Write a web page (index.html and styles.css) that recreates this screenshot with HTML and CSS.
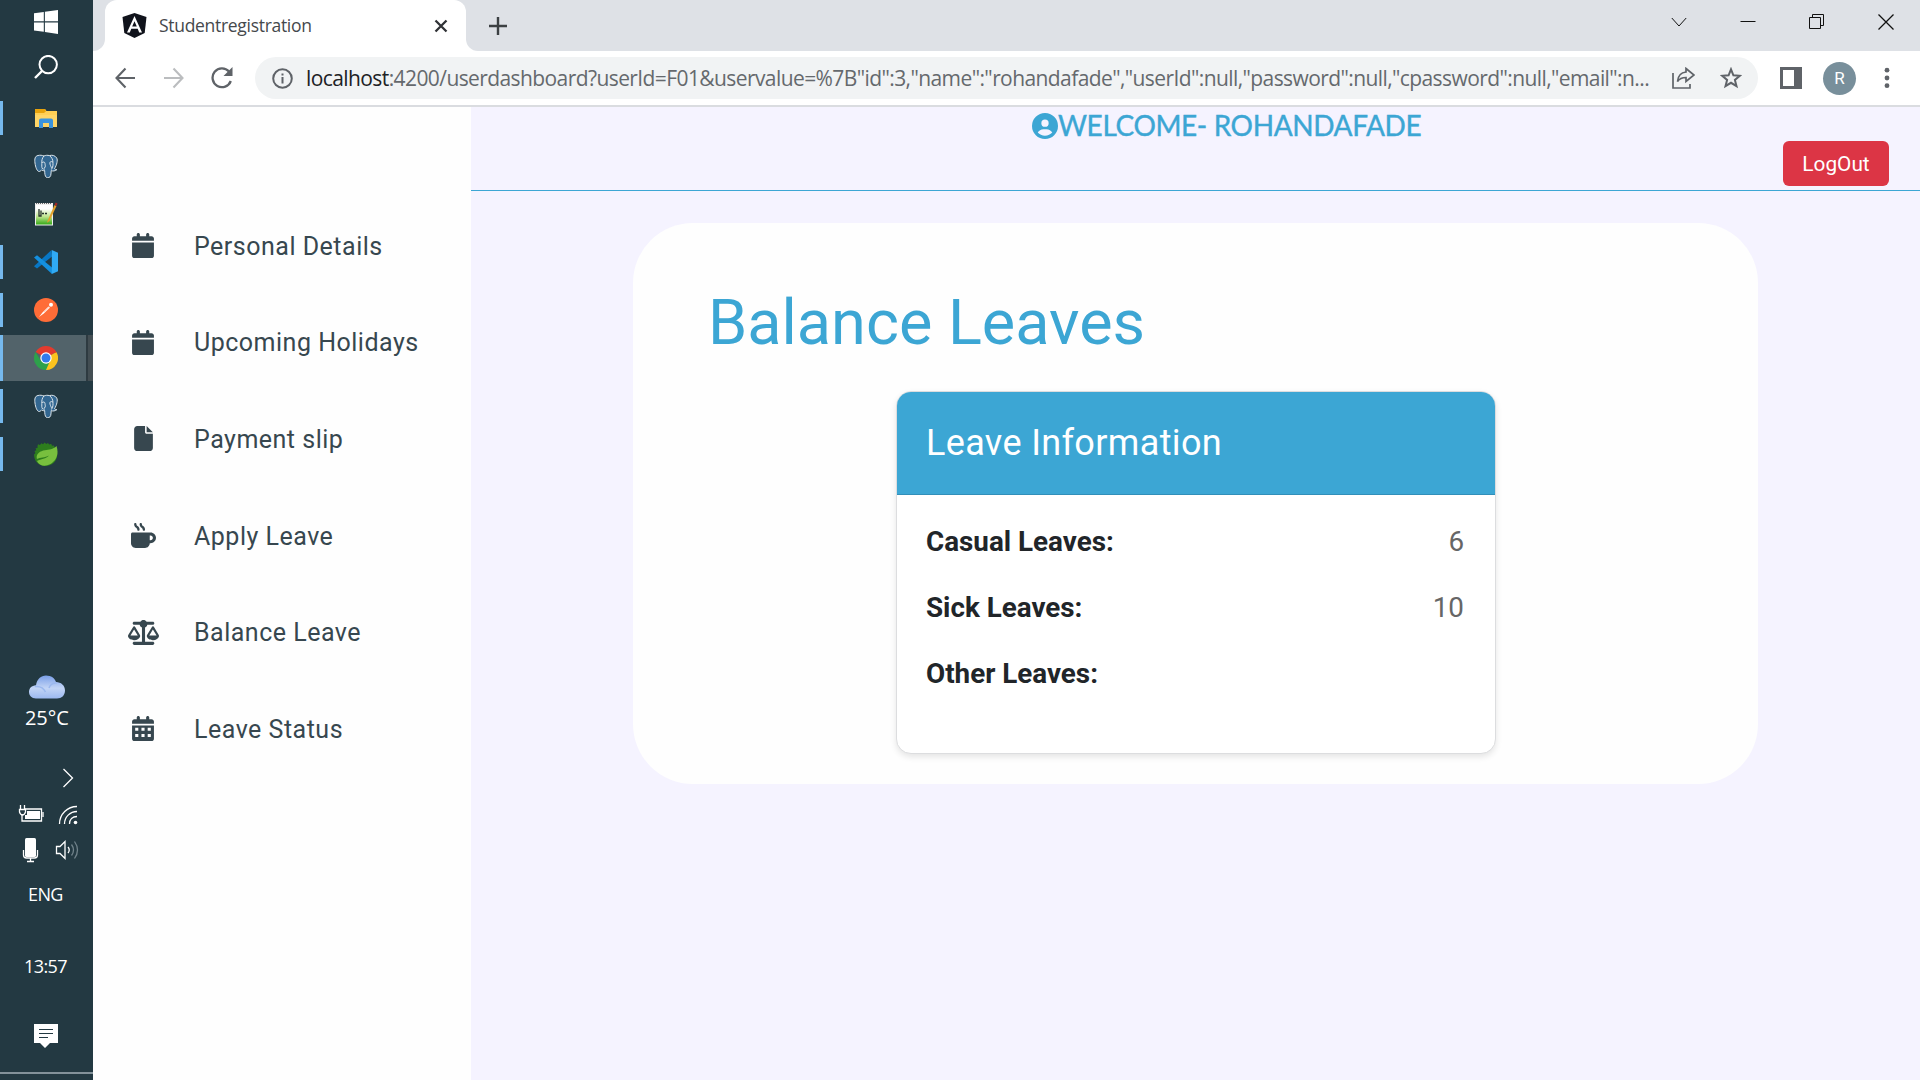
FILE: index.html
```html
<!DOCTYPE html>
<html lang="en">
<head>
<meta charset="utf-8">
<title>Studentregistration</title>
<link rel="stylesheet" href="styles.css">
</head>
<body>
<svg class="defs" width="0" height="0">
  <defs>
    <symbol id="calendar" viewBox="0 0 448 512"><path d="M96 32C96 14.300 110.300 0 128 0s32 14.300 32 32v32h128V32c0-17.700 14.300-32 32-32s32 14.300 32 32v32h48c26.500 0 48 21.500 48 48v48H0v-48C0 85.500 21.500 64 48 64h48V32zM0 192h448v272c0 26.500-21.500 48-48 48H48c-26.500 0-48-21.500-48-48V192z"/></symbol>
    <symbol id="elephant" viewBox="0 0 24 24">
      <path d="M4 1.500C1 2 .4 5 1 9c.5 4 2 8.500 4.200 8.500 1 0 1.800-1 2.300-1.500 1 .7 2.600.8 3.200.7 0 3 .3 5.500 1.500 6.500 1.500 1 4 .4 4.500-1.600.5-1.700.3-3.500.5-5 1.500.7 4.200.4 5.600-.9-1.200-.3-2-.4-2.300-1C22.800 11 24 6 22.700 4 21 1.300 18 .8 15.500 1.600c-2-.5-4-.4-5.500.4C8.200 1.200 6 1 4 1.500z" fill="#336791" stroke="#dbe4ea" stroke-width="1"/>
      <path d="M9.800 2C8.300 4 7.500 6.500 7.800 9.500c.2 2-.5 3.500.8 5.500M8 8.500c1.500-1 3-.5 3 1 0 1.500 1 3-.6 4.500-.8 1-.5 2 .4 2.500M15.500 1.600c2 1.500 3.500 4 3.400 6.400 0 2 .7 4-1.500 7.500M18.700 8c-1.300-.7-2.700-.5-2.800.8-.1 1.800 1 3.500 1.600 5" fill="none" stroke="#dbe4ea" stroke-width="1"/>
    </symbol>
  </defs>
</svg>
<div class="screen">
  <aside class="taskbar">
    <div class="task start"><svg width="24" height="24" viewBox="0 0 24 24" fill="#fff"><path d="M0 3.300 9.800 2v9.300H0zM10.900 1.800 24 0v11.300H10.900zM0 12.500h9.800v9.200L0 20.400zM10.900 12.500H24V24l-13.100-1.900z"/></svg></div>
    <div class="task find"><svg width="24" height="24" viewBox="0 0 24 24" fill="none" stroke="#fff" stroke-width="2"><circle cx="14.200" cy="9.600" r="8.700"/><path d="M8 16 1 23" stroke-width="2.400"/></svg></div>
    <div class="task open"><svg width="24" height="24" viewBox="0 0 24 24"><path d="M1 3h10l1.500 2H23v16H1z" fill="#ffcf55"/><path d="M1 3h10l1 2.200L10 7H1z" fill="#e8a30c"/><path d="M1 9h22v12H1z" fill="#ffd566"/><path d="M5 22v-7.500q0-2 2-2h10q2 0 2 2V22h-4v-5H9v5z" fill="#3b93dc"/></svg></div>
    <div class="task"><svg width="24" height="24"><use href="#elephant"/></svg></div>
    <div class="task"><svg width="24" height="24" viewBox="0 0 24 24"><defs><linearGradient id="note" x1="0" y1="0" x2="0" y2="1"><stop offset=".2" stop-color="#fff"/><stop offset=".6" stop-color="#bde58c"/><stop offset="1" stop-color="#35a817"/></linearGradient></defs><rect x="1" y="1" width="18" height="22.500" fill="#eee"/><rect x="2" y="3" width="16" height="19.500" fill="url(#note)"/><path d="M2 1.500h16" stroke="#666" stroke-dasharray="1 1"/><path d="M5 7v7h2V8.500M8 11.500h2m1 0h2" stroke="#27332c" fill="none" stroke-width="1.300"/><path d="m13.500 19 7-16 2 1-7 15-2.600 1.800z" fill="#e2a02b"/><path d="m20.500 3 1.200-2.500 1.800 1L22.500 4z" fill="#a52620"/></svg></div>
    <div class="task open"><svg width="24" height="24" viewBox="0 0 24 24"><path d="M17.500 0 18 6.500 3 18.500 0 16.200z" fill="#0877c4"/><path d="M0 7.600 3 5.300 18 17.400V24z" fill="#1490df"/><path d="M17.800 0 24 2.800v18.400L17.800 24z" fill="#30aaf4"/></svg></div>
    <div class="task open"><svg width="24" height="24" viewBox="0 0 24 24"><circle cx="12" cy="12" r="12" fill="#ff6c37"/><path d="m5 19 3.500-4.500 6-6 1.300 1.300-6 5.700z" fill="#fff"/><path d="m9.500 13.800 5.500-5 .8.800-5.300 5z" fill="#ffd5c5"/><circle cx="17" cy="6.800" r="2" fill="#fff"/></svg></div>
    <div class="task open active"><svg width="24" height="24" viewBox="0 0 24 24"><path d="M12 12 1.600 6A12 12 0 0 1 22.400 6z" fill="#e33b2e"/><path d="M12 12 22.400 6A12 12 0 0 1 12 24z" fill="#fcc31e"/><path d="M12 24A12 12 0 0 1 1.600 6L7 15l5 2.500 3.500-1.500z" fill="#2da14b"/><path d="M12 6.500h10.700L22.400 6H12z" fill="#e33b2e"/><circle cx="12" cy="12" r="5.700" fill="#fff"/><circle cx="12" cy="12" r="4.500" fill="#317bec"/></svg></div>
    <div class="task open"><svg width="24" height="24"><use href="#elephant"/></svg></div>
    <div class="task open"><svg width="24" height="24" viewBox="0 0 24 24"><path d="M3.500 4 4 2.300l2 .8L7.300 1.300l1.700 1L10.700.6l1.500 1.500L14 .9l1.200 1.600 2-.8.8 2 2-.3.500 2 2.500 4.600c1.500 8-4 14-11.500 14C4.500 24 0 19 0 12.500L1.500 11 .5 9.300l1.700-1L1.600 6.300l1.900-.2z" fill="#2d7d1d"/><path d="M22.500 4C19 7.500 15 7.500 11 8.200 5 9 1.500 13 3 17c3-2 8-1 12-3.500-3 3.500-8 3.500-12 5.500C5 24 11 25 16 22.300 23 18.500 25 11 22.500 4z" fill="#78bf3e"/></svg></div>

    <div class="weather">
      <svg width="36" height="24" viewBox="0 0 36 24"><defs><linearGradient id="cloud" x1="0" y1="0" x2="0" y2="1"><stop offset="0" stop-color="#7a9fe8"/><stop offset=".55" stop-color="#c3d5f6"/><stop offset="1" stop-color="#9cb9f0"/></linearGradient></defs><path d="M7 23.500C2.500 23.500 0 20.500 0 17s2.500-6.500 7-6.700C8 4 12 .5 17 .5s9 2.800 10 6.500c5 0 9 3.500 9 8.500s-3.500 8-8 8z" fill="url(#cloud)"/><path d="M6 11.500c5-.5 9 2 10.500 5.500M20 13c1-4 5-5.500 8-5" fill="none" stroke="#9bb8ee" stroke-width="1.500"/></svg>
      <span>25°C</span>
    </div>
    <svg class="tray" width="93" height="102" viewBox="0 766 93 102" fill="none" stroke="#fff" stroke-width="1.300">
      <path d="m63.500 769 9 9-9 9"/>
      <path d="M25 809h16.500v12H22v-7"/><path d="M27 811h13v8H25v-4h2z" fill="#fff" stroke="none"/><path d="M43 812v5M20.500 805v4m4-4v4M19.500 809.500h6v2.500q-1 3-3 3t-3-3z"/>
      <path d="M59.500 824c0-10 8-17.500 17.500-17.500M64.500 824c0-7 5.500-12.500 12.500-12.500M69.500 824c0-4.500 3-7.500 7.500-7.500"/><circle cx="75.500" cy="822.500" r="1.800" fill="#fff" stroke="none"/>
      <rect x="25" y="838" width="11" height="19" rx="1.500" fill="#fff" stroke="none"/><path d="M23.500 850v5q0 3 3 3h8q3 0 3-3v-5M30.500 858v4M27 861.500h7"/>
      <path d="M56.500 850.500v-4h3.500l5-5v17l-5-5h-3.500zM68 847q2.500 3 0 6"/><path d="M71.500 844.500q4 5.500 0 11M74.500 841.500q6 8.500 0 17" stroke="#71838b"/>
    </svg>
    <div class="language">ENG</div>
    <div class="clock">13:57</div>
    <svg class="notice" width="24" height="24" viewBox="0 0 24 24"><path d="M0 0h24v19h-8l-5 5-5-5H0z" fill="#fff"/><path d="M5 5.500h14m-14 4h14m-14 4h9" stroke="#233942" stroke-width="1"/></svg>
    <div class="desktop-edge"></div>
  </aside>

  <main class="browser">
    <div class="tabstrip">
      <div class="left-edge"></div>
      <div class="tab">
        <svg width="25" height="25" viewBox="0 0 25 25"><path d="M12.500 0 24.500 4l-1.800 16-10.200 5L2.300 20 .5 4z" fill="#10131b"/><path d="M12.500 3 5 19.500h2.800l1.500-3.700h6.400l1.500 3.700H20zm0 5.300 2.300 5.200h-4.600z" fill="#fff" fill-rule="evenodd"/></svg>
        <span class="tab-title">Studentregistration</span>
        <svg class="close" width="14" height="14" viewBox="0 0 14 14" stroke="#303236" stroke-width="2.300"><path d="m1.500 1.500 11 11m0-11-11 11"/></svg>
      </div>
      <div class="strip-rest">
        <svg width="18" height="18" viewBox="0 0 18 18" stroke="#3c4043" stroke-width="2.400"><path d="M9 0v18M0 9h18"/></svg>
        <div class="window-buttons">
          <svg width="16" height="16" viewBox="0 0 16 16"><path d="m.8 4 7.200 8 7.200-8"/></svg>
          <svg width="16" height="16" viewBox="0 0 16 16"><path d="M.5 7.500h15"/></svg>
          <svg width="16" height="16" viewBox="0 0 16 16"><path d="M.5 3.500h11v11H.5zM3.500 3.500v-3h11v11h-3"/></svg>
          <svg width="16" height="16" viewBox="0 0 16 16" stroke-width="1.300"><path d="m.5.500 15 15m0-15-15 15"/></svg>
        </div>
      </div>
    </div>

    <div class="toolbar">
      <div class="nav">
        <svg width="22" height="22" viewBox="0 0 22 22" fill="none" stroke="#5f6368" stroke-width="2.100"><path d="M20 11H2M10.500 1.500 1.500 11l9 9.500"/></svg>
        <svg width="22" height="22" viewBox="0 0 22 22" fill="none" stroke="#bbbdbf" stroke-width="2.100"><path d="M1 11h19M10.500 1.500l9 9.500-9 9.500"/></svg>
        <svg width="22" height="22" viewBox="0 0 22 22" fill="none" stroke="#5f6368" stroke-width="2.300"><path d="M18 4.500a9.400 9.400 0 1 0 1.800 9.500"/><path d="M21.500 0v9h-9z" fill="#5f6368" stroke="none"/></svg>
      </div>
      <div class="omnibox">
        <svg width="21" height="21" viewBox="0 0 21 21" fill="none" stroke="#5f6368" stroke-width="2"><circle cx="10.500" cy="10.500" r="9.300"/><path d="M10.500 9v6.500m0-10v2"/></svg>
        <span class="url"><b>localhost</b>:4200/userdashboard?userId=F01&amp;uservalue=%7B"id":3,"name":"rohandafade","userId":null,"password":null,"cpassword":null,"email":n...</span>
        <svg width="23" height="22" viewBox="0 0 23 22" fill="none" stroke="#5f6368" stroke-width="1.700"><path d="M1 6v15h17v-4"/><path d="M14 1.500 22 8l-8 6.500v-4c-4 0-6.500 1-8.500 4C6 9 9 5.500 14 5z"/></svg>
        <svg width="22" height="22" viewBox="0 0 22 22" fill="none" stroke="#5f6368" stroke-width="2"><path d="m11 2.300 2.400 6 6.400.5-4.900 4.100 1.600 6.300-5.500-3.400-5.500 3.400 1.600-6.300-4.900-4.100 6.400-.5z"/></svg>
      </div>
      <svg class="panel-icon" width="22" height="22" viewBox="0 0 22 22"><path d="M0 0h22v22H0zM3 3v16h11V3z" fill="#5f6368" fill-rule="evenodd"/></svg>
      <div class="avatar">R</div>
      <svg class="more" width="6" height="22" viewBox="0 0 6 22" fill="#5f6368"><circle cx="3" cy="3.200" r="2.400"/><circle cx="3" cy="11" r="2.400"/><circle cx="3" cy="18.700" r="2.400"/></svg>
    </div>

    <div class="page">
      <nav class="sidebar">
        <a><span class="icon"><svg width="22" height="25"><use href="#calendar"/></svg></span>Personal Details</a>
        <a><span class="icon"><svg width="22" height="25"><use href="#calendar"/></svg></span>Upcoming Holidays</a>
        <a><span class="icon"><svg width="19" height="25" viewBox="0 0 384 512"><path d="M0 64C0 28.700 28.700 0 64 0h160v128c0 17.700 14.300 32 32 32h128v288c0 35.300-28.700 64-64 64H64c-35.300 0-64-28.700-64-64V64zm384 64H256V0l128 128z"/></svg></span>Payment slip</a>
        <a><span class="icon"><svg width="25" height="25" viewBox="0 0 512 512"><path d="M88 0C74.700 0 64 10.700 64 24c0 38.900 23.400 59.400 39.100 73.100l1.100 1C120.500 112.300 128 119.900 128 136c0 13.300 10.700 24 24 24s24-10.700 24-24c0-38.900-23.400-59.400-39.100-73.100l-1.100-1C119.500 47.700 112 40.100 112 24 112 10.700 101.300 0 88 0zM200 0c-13.300 0-24 10.700-24 24 0 38.900 23.400 59.400 39.100 73.100l1.100 1C232.500 112.300 240 119.900 240 136c0 13.300 10.700 24 24 24s24-10.700 24-24c0-38.900-23.400-59.400-39.100-73.100l-1.100-1C231.500 47.700 224 40.100 224 24c0-13.300-10.700-24-24-24zM32 192c-17.700 0-32 14.300-32 32v192c0 53 43 96 96 96h192c53 0 96-43 96-96h16c61.900 0 112-50.100 112-112s-50.100-112-112-112H32zm352 64h16c26.500 0 48 21.500 48 48s-21.500 48-48 48h-16v-96z"/></svg></span>Apply Leave</a>
        <a><span class="icon"><svg width="31" height="25" viewBox="0 0 640 512"><path d="M384 32h128c17.700 0 32 14.300 32 32s-14.300 32-32 32H398.400c-5.200 25.800-22.900 47.100-46.400 57.300V448h160c17.700 0 32 14.300 32 32s-14.300 32-32 32H128c-17.700 0-32-14.300-32-32s14.300-32 32-32h160V153.300c-23.500-10.300-41.200-31.600-46.400-57.300H128c-17.700 0-32-14.300-32-32s14.300-32 32-32h128c14.600-19.400 37.800-32 64-32s49.400 12.600 64 32zM125.800 195.800 51.300 320h150.400l-75.900-124.200zM126.200 416C61.500 416 7.700 381 0 335c-1-11 2-22 8-32l98-163c5-9 14-14 24-12 8 0 14 5 19 12l95 163c6 10 9 21 8 32-8 46-61 81-125.800 81zM513.800 195.800 439.300 320h150.400l-75.900-124.200zM514.200 416C449.500 416 395.700 381 388 335c-1-11 2-22 8-32l98-163c5-9 14-14 24-12 8 0 14 5 19 12l95 163c6 10 9 21 8 32-8 46-61 81-125.800 81z" fill-rule="evenodd"/></svg></span>Balance Leave</a>
        <a><span class="icon"><svg width="22" height="25" viewBox="0 0 448 512"><path fill-rule="evenodd" d="M128 0c17.700 0 32 14.300 32 32v32h128V32c0-17.700 14.300-32 32-32s32 14.300 32 32v32h48c26.500 0 48 21.500 48 48v48H0v-48c0-26.500 21.500-48 48-48h48V32c0-17.700 14.300-32 32-32zM0 192h448v272c0 26.500-21.500 48-48 48H48c-26.500 0-48-21.500-48-48V192zm64 48v64h64v-64H64zm128 0v64h64v-64h-64zm128 0v64h64v-64h-64zM64 368v64h64v-64H64zm128 0v64h64v-64h-64zm128 0v64h64v-64h-64z"/></svg></span>Leave Status</a>
      </nav>
      <section class="content">
        <header class="topbar">
          <div class="welcome"><svg width="26" height="26" viewBox="0 0 512 512"><path fill="#3ca6d4" fill-rule="evenodd" d="M256 0a256 256 0 1 1 0 512 256 256 0 0 1 0-512zM399 384.900C376.900 345.800 335 320 288 320h-64c-47 0-88.900 25.800-111 64.900 35.200 38.700 86.200 63.100 143 63.100s107.800-24.300 143-63.100zM256 272a72 72 0 1 0 0-144 72 72 0 1 0 0 144z"/></svg><span>WELCOME- ROHANDAFADE</span></div>
          <button class="logout">LogOut</button>
        </header>
        <article class="panel">
          <h1>Balance Leaves</h1>
          <div class="card">
            <h2>Leave Information</h2>
            <dl>
              <div><dt>Casual Leaves:</dt><dd>6</dd></div>
              <div><dt>Sick Leaves:</dt><dd>10</dd></div>
              <div><dt>Other Leaves:</dt><dd></dd></div>
            </dl>
          </div>
        </article>
      </section>
    </div>
  </main>
</div>
</body>
</html>
```
FILE: styles.css
```css
* { box-sizing: border-box; }
body { margin: 0; font-family: Roboto, sans-serif; overflow: hidden; }
svg { display: block; flex: none; }
.defs { position: absolute; }
.screen { display: flex; width: 1920px; height: 1080px; }

.taskbar { width: 93px; height: 1080px; background: #233942; color: #fff; font-family: "Open Sans", "Noto Sans", sans-serif; display: flex; flex-direction: column; }
.task { height: 48px; flex: none; display: flex; align-items: center; padding-left: 34px; }
.start { height: 44px; }
.find { height: 46px; margin-bottom: 4px; }
.open { padding-left: 31px; border-left: 3px solid #76b9ed; height: 34px; margin: 7px 0; }
.active { height: 46px; margin: 1px 0; background: linear-gradient(90deg, #52636a 83px, #2e3b41 83px 85px, #434e53 85px); }
.weather { margin-top: 197px; height: 60px; padding-left: 29px; font-size: 20px; line-height: 28px; letter-spacing: -.1px; }
.weather span { display: block; margin: 5px 0 0 -4px; }
.tray { margin-top: 31px; }
.language { margin-top: 12px; padding-left: 28px; font-size: 18px; line-height: 28px; letter-spacing: -.6px; }
.clock { margin-top: 43px; padding-left: 24px; font-size: 18px; line-height: 30px; letter-spacing: -.6px; }
.notice { margin: 43px 0 0 34px; }
.desktop-edge { margin-top: auto; height: 8px; border-top: 2px solid #83929a; }

.browser { flex: 1; min-width: 0; background: #fff; display: flex; flex-direction: column; }
.tabstrip { height: 51px; display: flex; background: linear-gradient(#dee1e6 20px, #fff 20px); flex: none; }
.left-edge { width: 12px; background: #dee1e6; border-bottom-right-radius: 12px; }
.tab { width: 361px; display: flex; align-items: center; padding: 0 18px 0 17px; border-radius: 12px 12px 0 0; background: #fff; }
.tab-title { margin: -2px 0 0 12px; flex: 1; font: 17.500px "Open Sans", sans-serif; letter-spacing: -.3px; color: #45484c; }
.strip-rest { flex: 1; background: #dee1e6; border-bottom-left-radius: 12px; display: flex; justify-content: space-between; align-items: center; padding: 0 26px 0 23px; }
.window-buttons { display: flex; gap: 53px; margin-top: -8px; fill: none; stroke: #111; stroke-width: 1; }

.toolbar { height: 56px; flex: none; border-bottom: 2px solid #dadce0; display: flex; align-items: center; padding: 0 30px 0 22px; }
.nav { display: flex; gap: 26px; width: 140px; }
.omnibox { width: 1503px; height: 42px; border-radius: 21px; background: #f1f3f4; display: flex; align-items: center; padding: 0 16px 0 17px; }
.url { margin-left: 13px; width: 1366px; font: 21px "Open Sans", sans-serif; letter-spacing: -.59px; color: #65696d; white-space: nowrap; }
.url b { font-weight: 400; color: #202124; }
.omnibox svg:last-child { margin-left: 25px; }
.panel-icon { margin-left: 22px; }
.avatar { margin-left: 21px; width: 33px; height: 33px; border-radius: 50%; background: #788f9b; color: #fff; display: flex; align-items: center; justify-content: center; font-size: 17px; flex: none; }
.more { margin-left: 28px; }

.page { flex: 1; display: flex; min-height: 0; }
.sidebar { width: 378px; background: #fefefe; padding-top: 91px; color: #37474f; fill: #37474f; }
.sidebar a { height: 96.600px; display: flex; align-items: center; font-size: 25px; letter-spacing: .5px; white-space: nowrap; }
.icon { width: 50px; margin: 0 26px 1px 25px; display: flex; justify-content: center; }
.content { flex: 1; background: #f5f3ff; }
.topbar { height: 84px; border-bottom: 1px solid #3ca6d4; display: flex; flex-direction: column; padding: 5px 31px 0 0; }
.welcome { margin: 0 0 1px 561px; height: 28px; display: flex; align-items: center; color: #3ca6d4; font: 28px Lato, sans-serif; white-space: nowrap; letter-spacing: -.38px; }
.welcome span { margin-top: -3px; -webkit-text-stroke: .4px #3ca6d4; }
.logout { align-self: flex-end; width: 106px; height: 45px; border: 0; border-radius: 6px; background: #dc3545; color: #fff; font: 20.800px Roboto, sans-serif; padding: 0; }
.panel { width: 1125px; height: 561px; margin: 32px 0 0 162px; background: #fefefe; border-radius: 60px; padding: 60px 0 0 75px; }
h1 { margin: 0; color: #3ca6d4; font-weight: 400; font-size: 63px; line-height: 80px; }
.card { width: 600px; height: 363px; margin: 28px 0 0 188px; border: 1px solid #dcdddf; border-radius: 15px; overflow: hidden; background: #fff; box-shadow: 0 3px 6px rgba(0,0,0,.1); }
h2 { margin: 0; height: 103px; padding: 0 29px; background: #3ca6d4; border-bottom: 1px solid #318fb9; color: #fff; font-weight: 400; font-size: 36px; line-height: 102px; letter-spacing: .35px; }
dl { margin: 0; padding: 13px 31px 0 29px; font-size: 27.800px; }
dl div { height: 66px; display: flex; justify-content: space-between; align-items: center; }
dt { font-weight: 700; color: #212529; }
dd { margin: 0; color: #666; }
```
